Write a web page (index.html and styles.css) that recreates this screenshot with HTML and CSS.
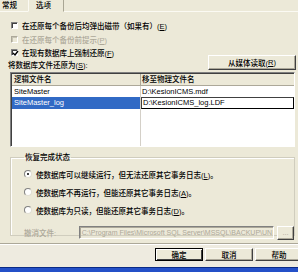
FILE: index.html
```html
<!DOCTYPE html>
<html>
<head>
<meta charset="utf-8">
<link rel="stylesheet" href="styles.css">
</head>
<body>
<div class="tabs">
  <div class="tab">常规</div>
  <div class="tab active">选项</div>
  <div class="tab-rest"></div>
</div>
<div class="panel">
  <div class="chk-row"><span class="cb"></span><span>在还原每个备份后均弹出磁带（如果有）(<u>E</u>)</span></div>
  <div class="chk-row disabled"><span class="cb"></span><span>在还原每个备份前提示(<u>P</u>)</span></div>
  <div class="chk-row short"><span class="cb"><svg width="7" height="7" viewBox="0 0 7 7"><polyline points="1,3 3,5 6,1" fill="none" stroke="#000" stroke-width="1.4"/></svg></span><span>在现有数据库上强制还原(<u>F</u>)</span></div>
  <div class="label-row">
    <span class="lbl">将数据库文件还原为(<u>S</u>):</span>
    <span class="btn media">从媒体读取(<u>R</u>)</span>
  </div>
  <div class="grid">
    <div class="row head"><div class="c1">逻辑文件名</div><div class="c2">移至物理文件名</div></div>
    <div class="row"><div class="c1">SiteMaster</div><div class="c2">D:\KesionICMS.mdf</div></div>
    <div class="row sel"><div class="c1"><span>SiteMaster_log</span></div><div class="c2"><span class="edit">D:\KesionICMS_log.LDF</span></div></div>
    <div class="row fill"><div class="c1"></div><div class="c2"></div></div>
  </div>
  <fieldset class="group">
    <legend>恢复完成状态</legend>
    <div class="radio-row"><span class="rb on"></span><span>使数据库可以继续运行，但无法还原其它事务日志(<u>L</u>)。</span></div>
    <div class="radio-row"><span class="rb"></span><span>使数据库不再运行，但能还原其它事务日志(<u>A</u>)。</span></div>
    <div class="radio-row"><span class="rb"></span><span>使数据库为只读，但能还原其它事务日志(<u>D</u>)。</span></div>
    <div class="undo-row">
      <span class="undo-lbl">撤消文件:</span>
      <span class="input">C:\Program Files\Microsoft SQL Server\MSSQL\BACKUP\UNI</span>
      <span class="btn dots">...</span>
    </div>
  </fieldset>
</div>
<div class="footer">
  <span class="btn def">确定</span>
  <span class="btn">取消</span>
  <span class="btn">帮助</span>
</div>
<div class="taskbar"></div>
</body>
</html>
```
FILE: styles.css
```css
html, body {
  margin: 0;
  padding: 0;
}
body {
  width: 298px;
  height: 272px;
  overflow: hidden;
  background: #ECE9D8;
  font-family: "Liberation Sans", "Noto Sans CJK SC", sans-serif;
  font-size: 7.5px;
  font-weight: 500;
  color: #000;
  display: flex;
  flex-direction: column;
}
u { text-decoration: underline; }

.tabs {
  display: flex;
  height: 12px;
  flex: none;
}
.tab {
  height: 11px;
  line-height: 11px;
  border-bottom: 1px solid #FBFAF3;
  white-space: nowrap;
}
.tab:first-child { width: 26px; padding-left: 2px; }
.tab.active {
  width: 27px;
  padding-left: 7px;
  border-left: 1px solid #FBFAF3;
  border-right: 1px solid #A9A694;
  border-bottom-color: #ECE9D8;
}
.tab-rest { flex: 1; border-bottom: 1px solid #FBFAF3; height: 11px; }

.panel {
  padding: 6px 3px 0 10px;
  flex: none;
}
.chk-row {
  height: 14px;
  display: flex;
  align-items: center;
  gap: 4px;
  padding-left: 1px;
  white-space: nowrap;
}
.chk-row.short { height: 13px; }
.cb {
  width: 5px;
  height: 5px;
  border: 1px solid;
  border-color: #808080 #FFFFFF #FFFFFF #808080;
  box-shadow: inset 1px 1px 0 #404040;
  background: #fff;
  padding: 0;
  display: flex;
  position: relative;
  flex: none;
}
.cb svg { position: absolute; left: 0; top: 0; }
.disabled { color: #ACA899; }
.disabled .cb {
  background: #ECE9D8;
  border-color: #ACA899 #FFFFFF #FFFFFF #ACA899;
  box-shadow: inset 1px 1px 0 #C6C3B3;
}

.label-row {
  height: 13px;
  display: flex;
  justify-content: space-between;
  align-items: flex-start;
  margin-left: -2px;
  white-space: nowrap;
}
.lbl { line-height: 13px; }
.btn {
  display: flex;
  align-items: center;
  justify-content: center;
  box-sizing: border-box;
  border: 1px solid;
  border-color: #FFFFFF #404040 #404040 #FFFFFF;
  box-shadow: inset -1px -1px 0 #ACA899;
  background: #ECE9D8;
  white-space: nowrap;
}
.btn.media {
  width: 88px;
  height: 15px;
  margin-top: -4px;
  margin-right: -1px;
}

.grid {
  height: 75px;
  box-sizing: border-box;
  border: 1px solid;
  border-color: #808080 #FFFFFF #FFFFFF #808080;
  box-shadow: inset 1px 1px 0 #404040;
  background: #fff;
  display: flex;
  flex-direction: column;
  padding: 1px 0 0 1px;
}
.row { display: flex; height: 11px; line-height: 11px; white-space: nowrap; }
.row .c1 { width: 126px; border-right: 1px solid #D4D0C8; padding-left: 2px; box-sizing: content-box; }
.row .c2 { flex: 1; padding-left: 1px; overflow: hidden; }
.row.head { height: 12px; line-height: 11px; background: #ECE9D8; }
.row.head .c1, .row.head .c2 { border-bottom: 1px solid #ACA899; }
.row.head .c1 { border-right: 1px solid #ACA899; }
.row.sel { height: 12px; line-height: 12px; }
.row.sel .c1 { background: #316AC5; color: #fff; }
.row.sel .c2 { padding-left: 0; }
.edit {
  display: block;
  height: 12px;
  line-height: 10px;
  box-sizing: border-box;
  border: 1px solid #404040;
  border-right-color: #000;
  border-bottom-color: #000;
  padding-left: 1px;
}
.row.fill { flex: 1; }

.group {
  margin: 6px 0 0 0;
  padding: 0 0 3px 13px;
  border: 1px solid #D0CDBE;
  box-shadow: inset 1px 1px 0 #fff;
  min-inline-size: 0;
  height: 83px;
  box-sizing: border-box;
}
.group legend {
  padding: 0 1px;
  margin-left: 0;
  line-height: 9px;
  height: 9px;
}
.radio-row {
  height: 18px;
  display: flex;
  align-items: center;
  gap: 4px;
  white-space: nowrap;
}
.radio-row:first-of-type { margin-top: 3px; }
.rb {
  width: 6px;
  height: 6px;
  border-radius: 50%;
  border: 1px solid #808080;
  border-bottom-color: #E0DED3;
  border-right-color: #E0DED3;
  background: #fff;
  display: flex;
  align-items: center;
  justify-content: center;
  flex: none;
}
.rb.on::after {
  content: "";
  width: 2px;
  height: 2px;
  border-radius: 50%;
  background: #000;
}
.undo-row {
  display: flex;
  align-items: center;
  height: 13px;
  margin-top: 7px;
  white-space: nowrap;
}
.undo-lbl { color: #ACA899; width: 55px; }
.input {
  width: 196px;
  height: 13px;
  box-sizing: border-box;
  border: 1px solid;
  border-color: #808080 #FFFFFF #FFFFFF #808080;
  box-shadow: inset 1px 1px 0 #ACA899;
  color: #ACA899;
  font-size: 7px;
  line-height: 11px;
  padding-left: 2px;
  overflow: hidden;
}
.btn.dots {
  width: 17px;
  height: 14px;
  margin-left: 3px;
  color: #ACA899;
}

.footer {
  margin-top: 7px;
  border-top: 1px solid #ACA899;
  box-shadow: inset 0 1px 0 #fff;
  background: #EEEBE0;
  flex: 1;
  display: flex;
  gap: 2px;
  padding: 4px 0 0 155px;
}
.footer .btn {
  width: 48px;
  height: 13px;
  flex: none;
}
.footer .btn.def {
  border: 1px solid #000;
  box-shadow: inset 1px 1px 0 #fff, inset -1px -1px 0 #404040;
}
.taskbar {
  height: 4px;
  flex: none;
  background: #2450C8;
  border-top: 1px solid #0A2A86;
}
```
